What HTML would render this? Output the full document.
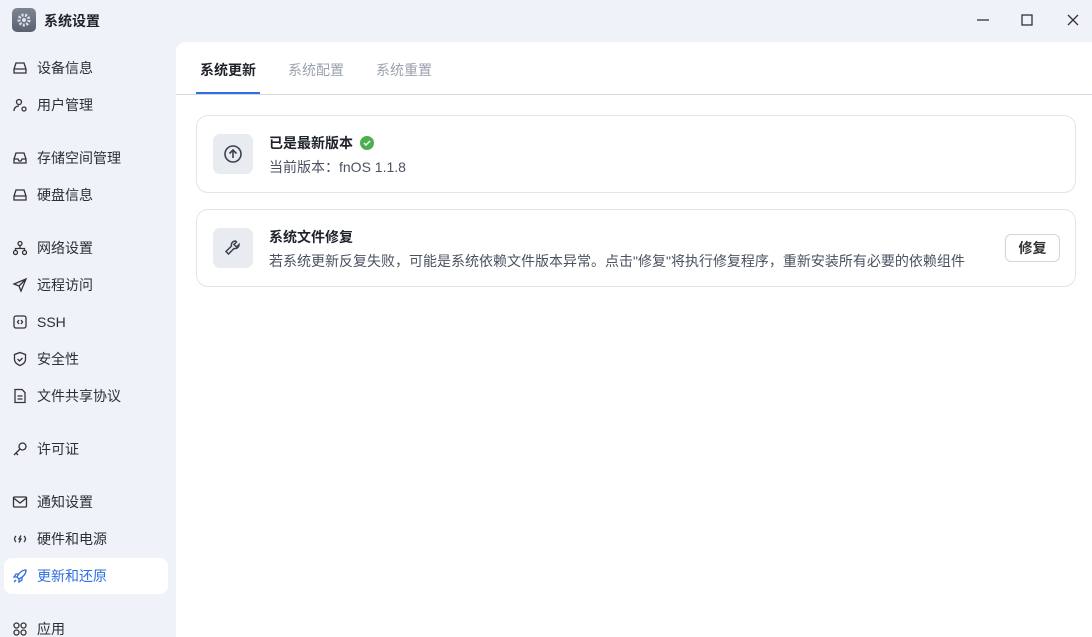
<!DOCTYPE html>
<html><head><meta charset="utf-8"><style>
*{margin:0;padding:0;box-sizing:border-box}
html,body{width:1092px;height:637px;overflow:hidden}
body{background:#eff2f8;font-family:"Liberation Sans","Noto Sans CJK SC",sans-serif;color:#1f2329;position:relative}
.logo{position:absolute;left:12px;top:8px;width:24px;height:24px;border-radius:5px;background:linear-gradient(#7d8593,#5a6270)}
.title{position:absolute;left:44px;top:11px;font-size:14px;font-weight:bold}
.wc{position:absolute;top:10px;font-size:14px;color:#333}
.nav{position:absolute;left:4px;width:164px;height:36px;display:flex;align-items:center;font-size:14px;color:#2b2f36;border-radius:8px}
.nav svg{margin-left:8px;margin-right:9px;width:16px;height:16px}
.nav.act{background:#fff;color:#2f6fe0}
.main{position:absolute;left:176px;top:42px;width:916px;height:595px;background:#fff;border-top-left-radius:10px}
.tabs{position:absolute;left:0;top:0;width:916px;height:53px;border-bottom:1px solid #d5dbe6}
.tab{position:absolute;top:18px;font-size:14px;color:#9aa1ad}
.card{position:absolute;left:20px;width:880px;border:1px solid #e0e4ec;border-radius:12px}
.ic{position:absolute;left:16px;top:18px;width:40px;height:40px;border-radius:7px;background:#e8ebef;display:flex;align-items:center;justify-content:center}
.h{position:absolute;left:72px;top:17px;font-size:14px;font-weight:bold}
.d{position:absolute;left:72px;top:41px;font-size:14px;color:#4a5160}
.btn{position:absolute;right:15px;top:24px;width:55px;height:28px;border:1px solid #cfd5de;border-radius:6px;font-size:14px;font-weight:bold;display:flex;align-items:center;justify-content:center;color:#333}
</style></head><body>
<div class="logo"><svg width="24" height="24" viewBox="0 0 24 24"><circle cx="12" cy="12" r="5" fill="none" stroke="#dde" stroke-width="3" stroke-dasharray="2 1.5"/><circle cx="12" cy="12" r="2" fill="#dde"/></svg></div>
<div class="title">系统设置</div>
<svg class="wc" style="left:976px;top:14px" width="14" height="12"><line x1="1" y1="6" x2="13" y2="6" stroke="#333" stroke-width="1.3"/></svg>
<svg class="wc" style="left:1020px;top:13px" width="14" height="14"><rect x="2" y="2" width="10" height="10" fill="none" stroke="#333" stroke-width="1.3"/></svg>
<svg class="wc" style="left:1066px;top:13px" width="14" height="14"><path d="M2 2L12 12M12 2L2 12" stroke="#333" stroke-width="1.3"/></svg>

<div class="nav" style="top:50px"><svg viewBox="0 0 16 16" fill="none" stroke="#333" stroke-width="1.3"><path d="M2 9l2-6h8l2 6v4H2z M2 9h12"/></svg>设备信息</div>
<div class="nav" style="top:87px"><svg viewBox="0 0 16 16" fill="none" stroke="#333" stroke-width="1.3"><circle cx="7" cy="5" r="2.5"/><path d="M2 14c0-3 2-5 5-5"/><circle cx="12" cy="12" r="2"/></svg>用户管理</div>
<div class="nav" style="top:140px"><svg viewBox="0 0 16 16" fill="none" stroke="#333" stroke-width="1.3"><path d="M2 9l2-6h8l2 6v4H2z M2 9h4l1 2h2l1-2h4"/></svg>存储空间管理</div>
<div class="nav" style="top:177px"><svg viewBox="0 0 16 16" fill="none" stroke="#333" stroke-width="1.3"><path d="M2 9l2-6h8l2 6v4H2z M2 9h12"/></svg>硬盘信息</div>
<div class="nav" style="top:230px"><svg viewBox="0 0 16 16" fill="none" stroke="#333" stroke-width="1.3"><circle cx="8" cy="3.5" r="2"/><circle cx="3.5" cy="12.5" r="2"/><circle cx="12.5" cy="12.5" r="2"/><path d="M8 5.5v3M3.5 10.5V8.5h9v2"/></svg>网络设置</div>
<div class="nav" style="top:267px"><svg viewBox="0 0 16 16" fill="none" stroke="#333" stroke-width="1.3"><path d="M14 2L2 7l5 2 2 5z M7 9l7-7"/></svg>远程访问</div>
<div class="nav" style="top:304px"><svg viewBox="0 0 16 16" fill="none" stroke="#333" stroke-width="1.3"><rect x="2" y="2" width="12" height="12" rx="2"/><path d="M7 6L5.5 8 7 10M9 6l1.5 2L9 10"/></svg>SSH</div>
<div class="nav" style="top:341px"><svg viewBox="0 0 16 16" fill="none" stroke="#333" stroke-width="1.3"><path d="M8 1.5l5.5 2v5c0 3-3 5-5.5 6-2.5-1-5.5-3-5.5-6v-5z M5.5 8l2 2 3-3"/></svg>安全性</div>
<div class="nav" style="top:378px"><svg viewBox="0 0 16 16" fill="none" stroke="#333" stroke-width="1.3"><path d="M3 1.5h7l3 3v10H3z M5.5 8h5M5.5 11h5"/></svg>文件共享协议</div>
<div class="nav" style="top:431px"><svg viewBox="0 0 16 16" fill="none" stroke="#333" stroke-width="1.3"><circle cx="10.5" cy="5.5" r="3.5"/><path d="M8 8l-6 6M4 12l2 2"/></svg>许可证</div>
<div class="nav" style="top:484px"><svg viewBox="0 0 16 16" fill="none" stroke="#333" stroke-width="1.3"><rect x="1.5" y="3" width="13" height="10" rx="1"/><path d="M1.5 4l6.5 5 6.5-5"/></svg>通知设置</div>
<div class="nav" style="top:521px"><svg viewBox="0 0 16 16" fill="none" stroke="#333" stroke-width="1.3"><path d="M4 5Q1 8 4 11M12 5q3 3 0 6M9 4.5L7 8h2l-2 3.5"/></svg>硬件和电源</div>
<div class="nav act" style="top:558px"><svg viewBox="0 0 16 16" fill="none" stroke="#2f6fe0" stroke-width="1.3"><path d="M14 2c-4 0-7 3-9 7l2 2c4-2 7-5 7-9z M5 9l-3 0 2-3 3 0M7 11v3l3-2v-3M2 14l2-2"/></svg>更新和还原</div>
<div class="nav" style="top:611px"><svg viewBox="0 0 16 16" fill="none" stroke="#333" stroke-width="1.3"><circle cx="4.5" cy="4.5" r="2.5"/><circle cx="11.5" cy="4.5" r="2.5"/><circle cx="4.5" cy="11.5" r="2.5"/><circle cx="11.5" cy="11.5" r="2.5"/></svg>应用</div>

<div class="main">
<div class="tabs">
<div class="tab" style="left:24px;color:#1f2329;font-weight:bold">系统更新</div>
<div style="position:absolute;left:20px;top:50px;width:64px;height:2px;background:#2f6fe0"></div>
<div class="tab" style="left:112px">系统配置</div>
<div class="tab" style="left:200px">系统重置</div>
</div>
<div class="card" style="top:73px;height:78px">
<div class="ic"><svg width="20" height="20" viewBox="0 0 20 20" fill="none" stroke="#3b4150" stroke-width="1.6"><circle cx="10" cy="10" r="8"/><path d="M10 14V6M6.5 9.5L10 6l3.5 3.5"/></svg></div>
<div class="h">已是最新版本 <svg style="vertical-align:-2px;margin-left:3px" width="14" height="14"><circle cx="7" cy="7" r="7" fill="#4caf50"/><path d="M4 7l2 2 4-4" stroke="#fff" stroke-width="1.5" fill="none"/></svg></div>
<div class="d">当前版本：fnOS 1.1.8</div>
</div>
<div class="card" style="top:167px;height:78px">
<div class="ic"><svg width="20" height="20" viewBox="0 0 20 20" fill="none" stroke="#3b4150" stroke-width="1.5"><path d="M12.5 3a4 4 0 0 0-4 5L3 13.5 5.5 16l5.5-5.5a4 4 0 0 0 5-4l-2.5 2.5-2.5-2.5L13.5 4z"/></svg></div>
<div class="h">系统文件修复</div>
<div class="d">若系统更新反复失败，可能是系统依赖文件版本异常。点击"修复"将执行修复程序，重新安装所有必要的依赖组件</div>
<div class="btn">修复</div>
</div>
</div>
</body></html>
